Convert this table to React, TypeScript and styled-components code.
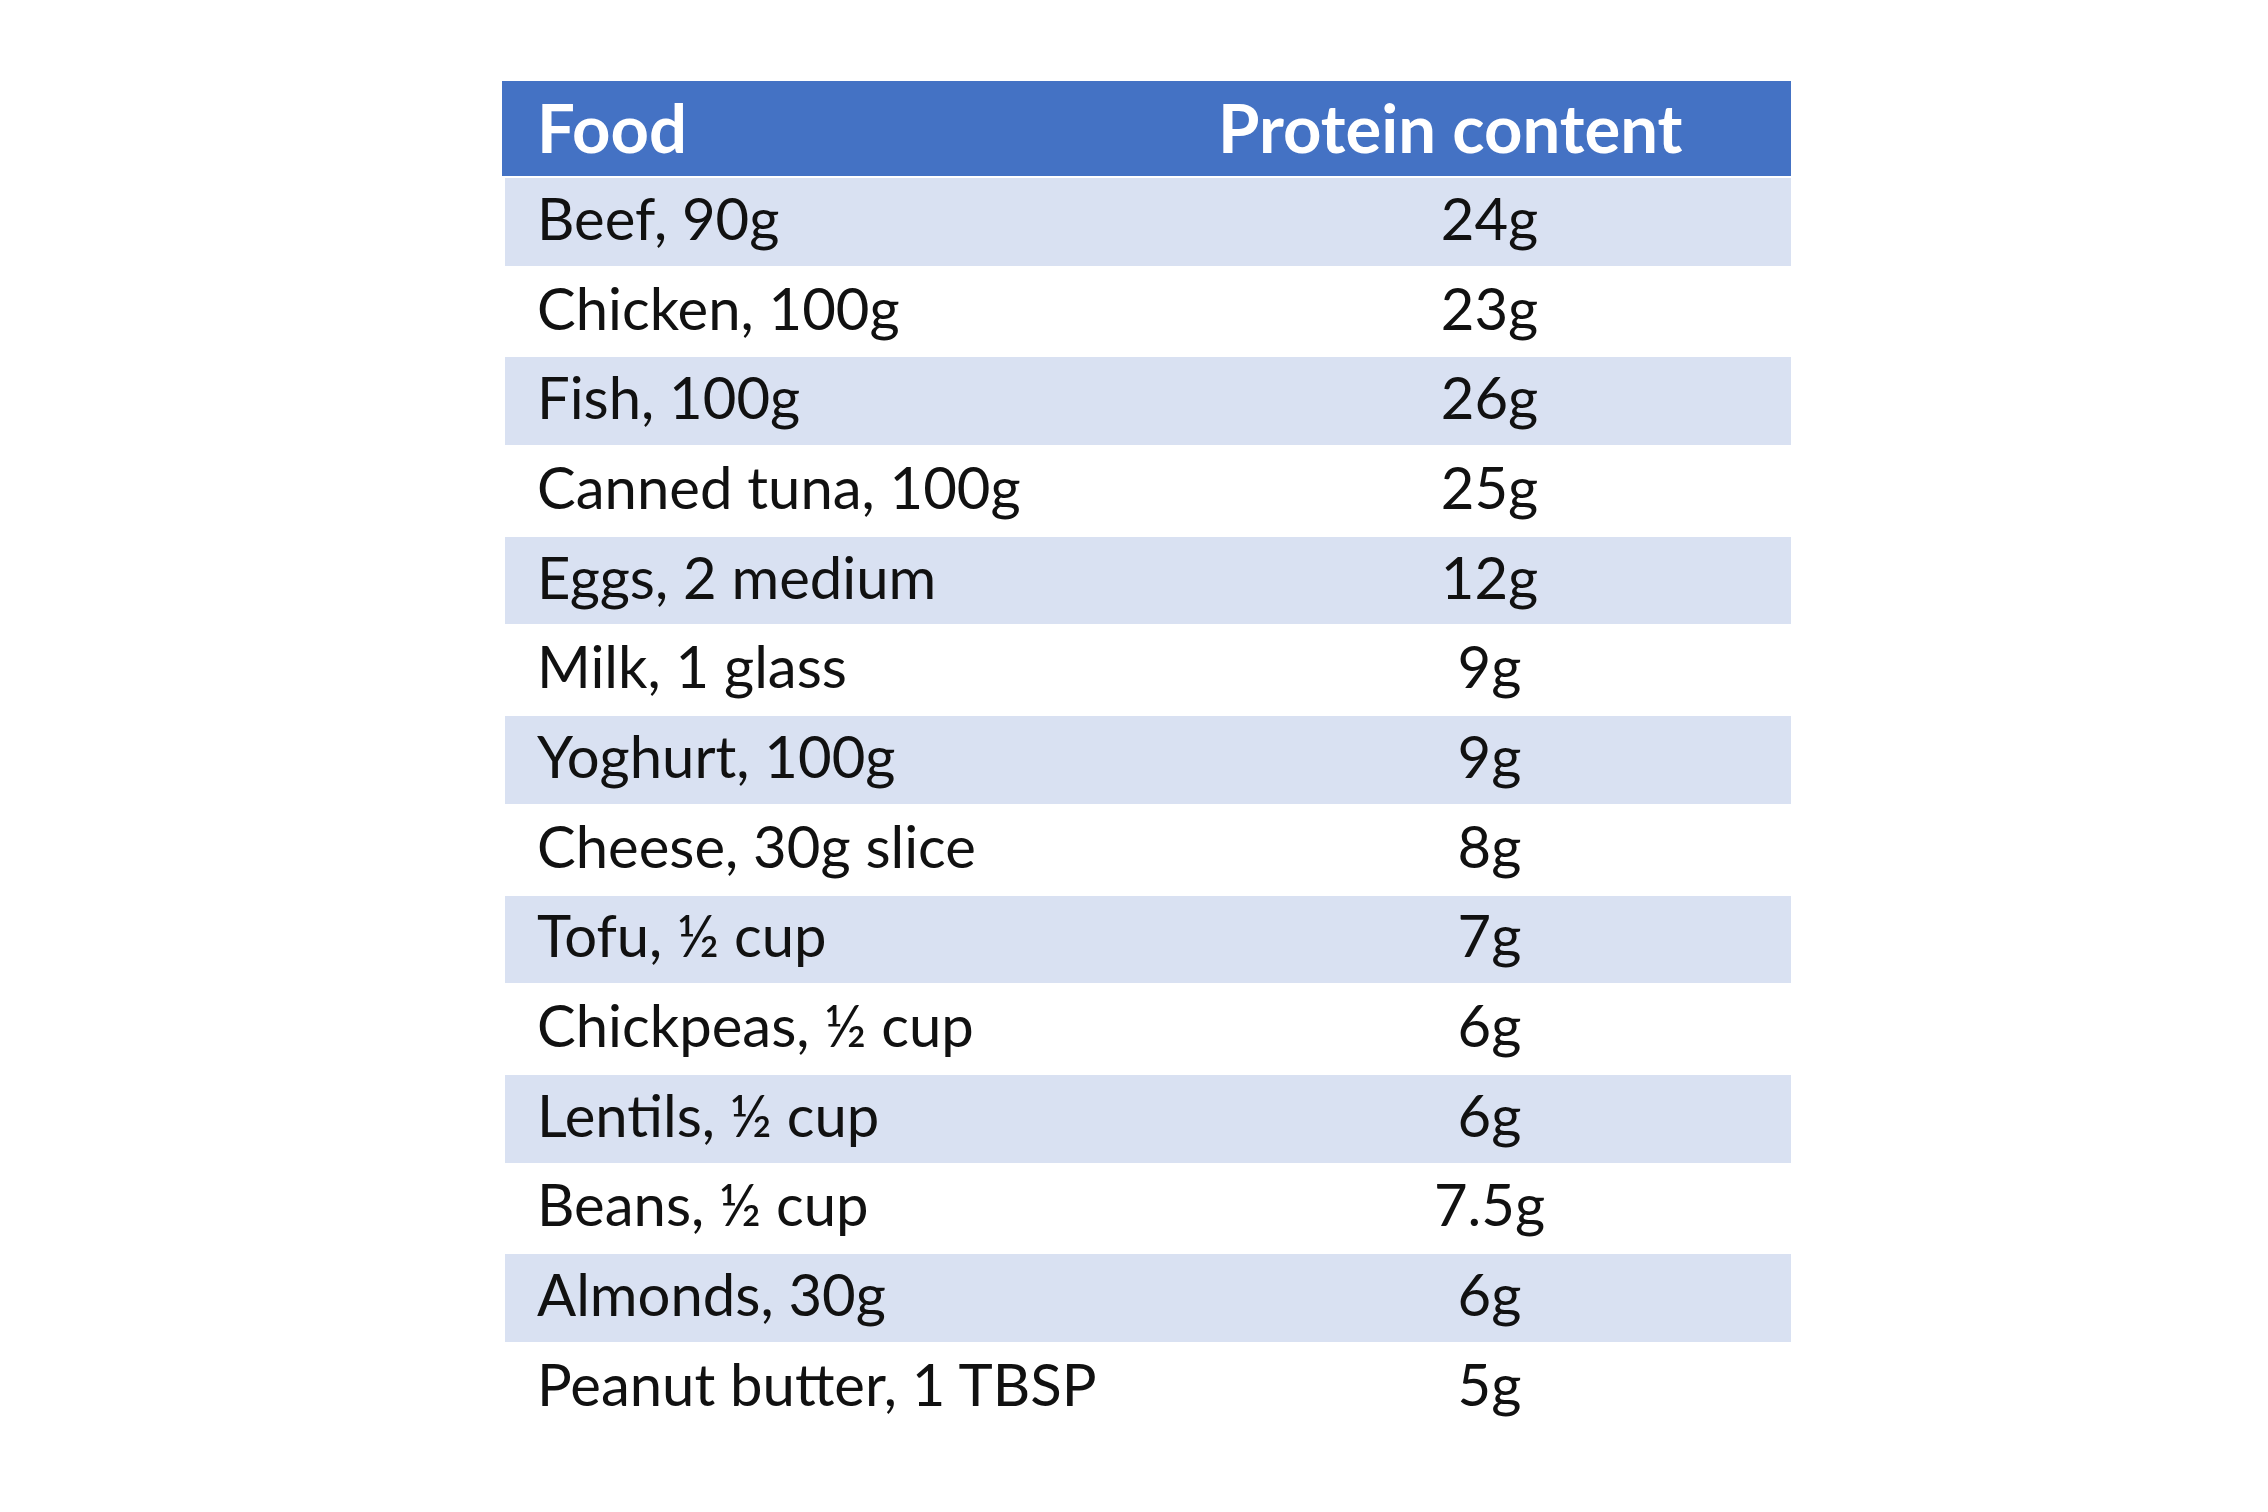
import React from "react";
import styled, { createGlobalStyle } from "styled-components";

const GlobalStyle = createGlobalStyle`
  html, body {
    margin: 0;
    padding: 0;
    background: #ffffff;
  }
  * {
    box-sizing: border-box;
  }
`;

const Page = styled.main`
  width: 2268px;
  height: 1512px;
  padding: 81px 0 0 502px;
  background: #fff;
  font-family: Lato, "Open Sans", "Liberation Sans", sans-serif;
`;

const Table = styled.div`
  width: 1289px;
  display: flex;
  flex-direction: column;
`;

const Row = styled.div<{ $shaded?: boolean }>`
  display: grid;
  grid-template-columns: 683px 603px;
  align-items: center;
  height: 89.7px;
  margin-left: 3px;
  border-top: 2px solid #fff;
  background: ${(p) => (p.$shaded ? "#d9e1f2" : "#fff")};
  color: #111;
  font-size: 58px;
`;

const HeadRow = styled(Row)`
  grid-template-columns: 686px 603px;
  height: 95px;
  margin-left: 0;
  border-top: none;
  background: #4472c4;
  color: #fff;
  font-size: 67px;
  font-weight: 700;
`;

const Cell = styled.div<{ $center?: boolean }>`
  padding-left: ${(p) => (p.$center ? "0" : "32px")};
  text-align: ${(p) => (p.$center ? "center" : "left")};
  white-space: nowrap;
  line-height: 1;
  padding-bottom: 8px;
`;

const HeadCell = styled(Cell)`
  padding-left: ${(p) => (p.$center ? "30px" : "35px")};
  text-align: left;
  padding-bottom: 2px;
`;

const foods: [string, string][] = [
  ["Beef, 90g", "24g"],
  ["Chicken, 100g", "23g"],
  ["Fish, 100g", "26g"],
  ["Canned tuna, 100g", "25g"],
  ["Eggs, 2 medium", "12g"],
  ["Milk, 1 glass", "9g"],
  ["Yoghurt, 100g", "9g"],
  ["Cheese, 30g slice", "8g"],
  ["Tofu, ½ cup", "7g"],
  ["Chickpeas, ½ cup", "6g"],
  ["Lentils, ½ cup", "6g"],
  ["Beans, ½ cup", "7.5g"],
  ["Almonds, 30g", "6g"],
  ["Peanut butter, 1 TBSP", "5g"],
];

export default function App() {
  return (
    <>
      <GlobalStyle />
      <Page>
        <Table>
          <HeadRow>
            <HeadCell>Food</HeadCell>
            <HeadCell $center>Protein content</HeadCell>
          </HeadRow>
          {foods.map(([food, protein], i) => (
            <Row key={food} $shaded={i % 2 === 0}>
              <Cell>{food}</Cell>
              <Cell $center>{protein}</Cell>
            </Row>
          ))}
        </Table>
      </Page>
    </>
  );
}
